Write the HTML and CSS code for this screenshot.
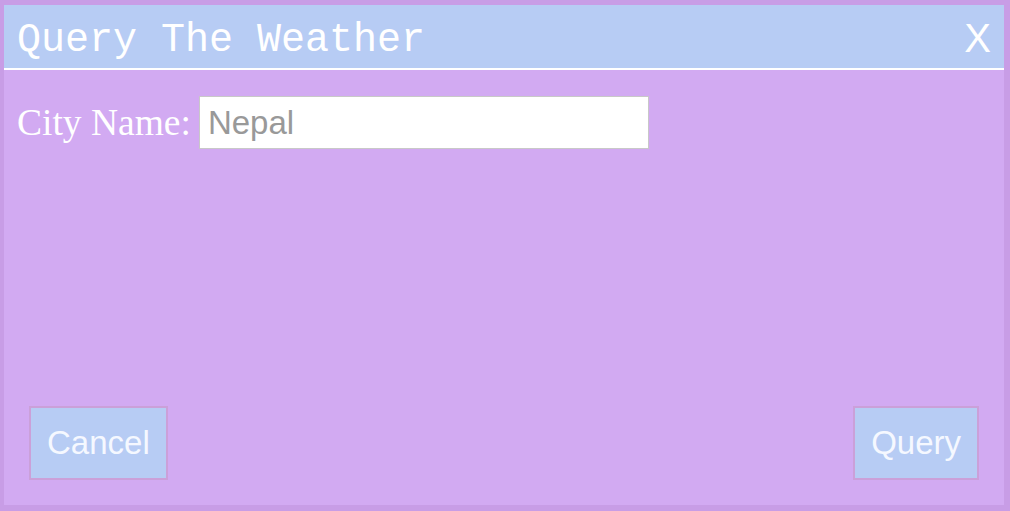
FILE: index.html
```html
<!DOCTYPE html>
<html>
<head>
<meta charset="utf-8">
<link rel="stylesheet" href="styles.css">
</head>
<body>
<div class="dialog">
  <div class="titlebar">
    <span class="title">Query The Weather</span>
    <span class="close">X</span>
  </div>
  <div class="field">
    <label class="label" for="city">City Name:</label>
    <input class="input" id="city" type="text" placeholder="Nepal">
  </div>
  <div class="actions">
    <button class="btn">Cancel</button>
    <button class="btn">Query</button>
  </div>
</div>
</body>
</html>
```
FILE: styles.css
```css
html, body {
  margin: 0;
  padding: 0;
}
body {
  background: #c89de6;
  height: 511px;
  overflow: hidden;
}
.dialog {
  margin: 5px 6px 6px 4px;
  height: 500px;
  background: #d2aaf2;
  display: flex;
  flex-direction: column;
}
.titlebar {
  background: #b7ccf4;
  border-bottom: 2px solid #ffffff;
  height: 55px;
  padding: 8px 13px 0 13px;
  display: flex;
  align-items: center;
  justify-content: space-between;
  color: #ffffff;
}
.title {
  font-family: "Liberation Mono", monospace;
  font-size: 40px;
}
.close {
  font-family: "Liberation Sans", sans-serif;
  font-size: 40px;
  margin-top: -4px;
}
.field {
  display: flex;
  align-items: center;
  margin-top: 26px;
  padding-left: 13px;
  gap: 8px;
}
.label {
  font-family: "Liberation Serif", serif;
  font-size: 37.5px;
  color: #ffffff;
}
.input {
  box-sizing: border-box;
  width: 450px;
  height: 53px;
  border: 1px solid #c8c8c8;
  background: #ffffff;
  padding: 0 8px;
  font-family: "Liberation Sans", sans-serif;
  font-size: 33px;
  color: #999999;
  outline: none;
}
.input::placeholder {
  color: #999999;
}
.actions {
  margin-top: auto;
  display: flex;
  justify-content: space-between;
  padding: 0 25px 25px 25px;
}
.btn {
  box-sizing: border-box;
  height: 74px;
  padding: 0 16px;
  border: 2px solid #cba0d9;
  background: #b7ccf4;
  color: #f5f8ff;
  font-family: "Liberation Sans", sans-serif;
  font-size: 33px;
}
```
